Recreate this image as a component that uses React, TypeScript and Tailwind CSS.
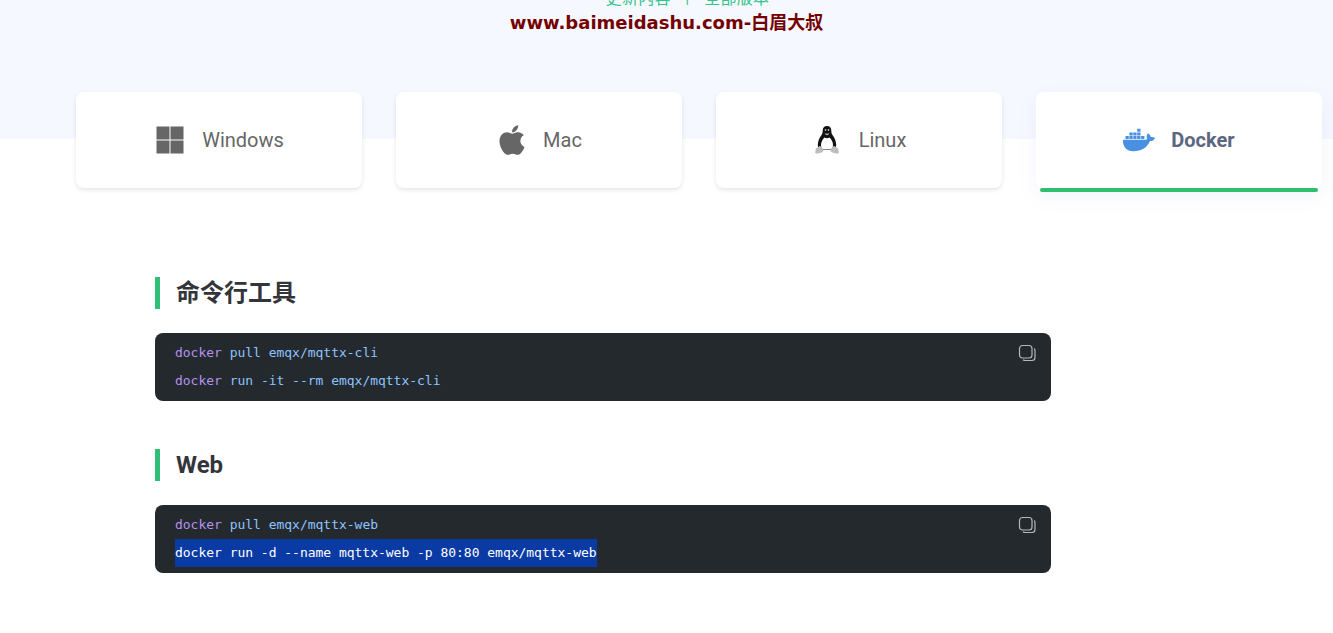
import React from 'react';
import { FaApple, FaDocker } from 'react-icons/fa';

const WindowsIcon = () => (
  <svg width="28" height="28" viewBox="0 0 28 28" fill="#666666">
    <rect x="0.5" y="0.5" width="13" height="13" />
    <rect x="14.5" y="0.5" width="13" height="13" />
    <rect x="0.5" y="14.5" width="13" height="13" />
    <rect x="14.5" y="14.5" width="13" height="13" />
  </svg>
);

const LinuxIcon = () => (
  <svg width="24" height="28" viewBox="0 0 24 28">
    <path d="M12 0c-2.800 0-4.300 1.800-4.300 4.500 0 2-.2 3-1.200 4.500C4.300 12 2.800 15.500 2.800 19c0 2 1 4 3.200 5h12c2.200-1 3.200-3 3.200-5 0-3.500-1.500-7-3.700-10-1-1.500-1.200-2.500-1.200-4.500C16.300 1.800 14.800 0 12 0z" fill="#111111" />
    <path d="M9.500 11.500C7.500 13.500 6 16 6 19c0 2 .8 3.500 2 4.500h8c1.200-1 2-2.500 2-4.500 0-3-1.500-5.500-3.500-7.500-.8.500-1.600.8-2.500.8s-1.700-.3-2.500-.8z" fill="#ffffff" />
    <circle cx="10.500" cy="4" r="0.800" fill="#ffffff" />
    <circle cx="13.500" cy="4" r="0.800" fill="#ffffff" />
    <path d="M9.500 6.500c.8.800 1.600 1.200 2.500 1.200s1.700-.4 2.500-1.200l-1 2c-.5.500-1 .7-1.500.7s-1-.2-1.500-.7z" fill="#b5b5b5" />
    <path d="M4.500 20c1.500 0 3 2 3.800 4.200.4 1.100-.8 2.300-2.500 2.500-1.800.2-3.300 1.200-4.800.7-1-.3-.9-1-.6-2 .3-1 .1-2 .5-2.800.5-.9 2-.8 3.600-2.600z" fill="#bdbdbd" />
    <path d="M19.500 20c-1.500 0-3 2-3.800 4.200-.4 1.100.8 2.300 2.500 2.500 1.800.2 3.300 1.200 4.800.7 1-.3.9-1 .6-2-.3-1-.1-2-.5-2.800-.5-.9-2-.8-3.600-2.600z" fill="#bdbdbd" />
  </svg>
);

const CopyIcon = () => (
  <svg width="18" height="18" viewBox="0 0 18 18" fill="none" stroke="#b4b7ba" strokeWidth="1.200" className="absolute right-[15px] top-[11px]">
    <rect x="1.500" y="1.500" width="12.500" height="12.500" rx="3" />
    <path d="M16.200 4.500c.7.700.8 1.500.8 2.500v6.500a3 3 0 0 1-3 3H7.500c-1 0-1.800-.2-2.500-.8" />
  </svg>
);

const tabs = [
  { name: 'Windows', icon: <WindowsIcon />, className: 'gap-[18px] pl-[2px]' },
  { name: 'Mac', icon: <FaApple size={34} color="#666666" />, className: 'gap-[14px] pr-[1px]' },
  { name: 'Linux', icon: <LinuxIcon />, className: 'gap-5 pl-[3px]' },
  { name: 'Docker', icon: <FaDocker size={32} color="#4a90e2" />, className: 'gap-4', active: true },
];

const Cmd = ({ parts }: { parts: string[] }) => (
  <div className="h-7 leading-7 whitespace-pre">
    <span className="text-[#b392f0]">docker</span>
    <span className="text-[#8cc4ff]"> {parts[0]} {parts[1]}</span>
  </div>
);

const CodeBlock = ({ children }: { children: React.ReactNode }) => (
  <div className="relative w-[896px] rounded-lg bg-[#24292d] px-5 py-[6px] text-[13px] tracking-[-0.02px] font-['DejaVu_Sans_Mono',monospace]">
    {children}
    <CopyIcon />
  </div>
);

const Heading = ({ children }: { children: React.ReactNode }) => (
  <h2 className="h-8 border-l-[5px] border-[#2fbf78] pl-4 text-2xl font-bold leading-8 text-[#33353a] font-['Roboto','Noto_Sans_CJK_SC',sans-serif]">
    {children}
  </h2>
);

export default function App() {
  return (
    <div className="h-[633px] overflow-hidden bg-white font-['Roboto','Noto_Sans_CJK_SC',sans-serif]">
      <header className="h-[139px] overflow-hidden bg-[#f5f8ff] text-center">
        <div className="-mt-[12px] h-[22px] whitespace-pre pl-[42px] text-base leading-[22px] tracking-[0.3px] text-[#34c388]">更新内容  ↑  全部版本</div>
        <div className="mt-[1px] text-[18px] font-bold leading-6 text-[#750000] font-['DejaVu_Sans','Noto_Sans_CJK_SC',sans-serif]">
          www.baimeidashu.com-白眉大叔
        </div>
      </header>

      <div className="-mt-[47px] flex gap-[34px] pl-[76px]">
        {tabs.map((tab) => (
          <div
            key={tab.name}
            className={`relative flex h-24 w-[286px] items-center justify-center rounded-lg bg-white ${tab.className} ${
              tab.active ? 'shadow-[0_8px_20px_rgba(90,120,200,0.08)]' : 'shadow-[0_2px_4px_rgba(0,0,0,0.1)]'
            }`}
          >
            {tab.icon}
            <span className={`text-[20px] ${tab.active ? 'font-bold text-[#5c6780]' : 'text-[#666666]'}`}>{tab.name}</span>
            {tab.active && <div className="absolute -bottom-1 left-1 right-1 h-1 rounded-sm bg-[#2fbf71]" />}
          </div>
        ))}
      </div>

      <main className="ml-[155px] mt-[89px] flex flex-col">
        <Heading>命令行工具</Heading>
        <div className="mt-6">
          <CodeBlock>
            <Cmd parts={['pull', 'emqx/mqttx-cli']} />
            <Cmd parts={['run', '-it --rm emqx/mqttx-cli']} />
          </CodeBlock>
        </div>
        <div className="mt-12">
          <Heading>Web</Heading>
        </div>
        <div className="mt-6">
          <CodeBlock>
            <Cmd parts={['pull', 'emqx/mqttx-web']} />
            <div className="h-7 leading-7 whitespace-pre">
              <span className="inline-block h-7 bg-[#0a3aa3] text-white">docker run -d --name mqttx-web -p 80:80 emqx/mqttx-web</span>
            </div>
          </CodeBlock>
        </div>
      </main>
    </div>
  );
}
